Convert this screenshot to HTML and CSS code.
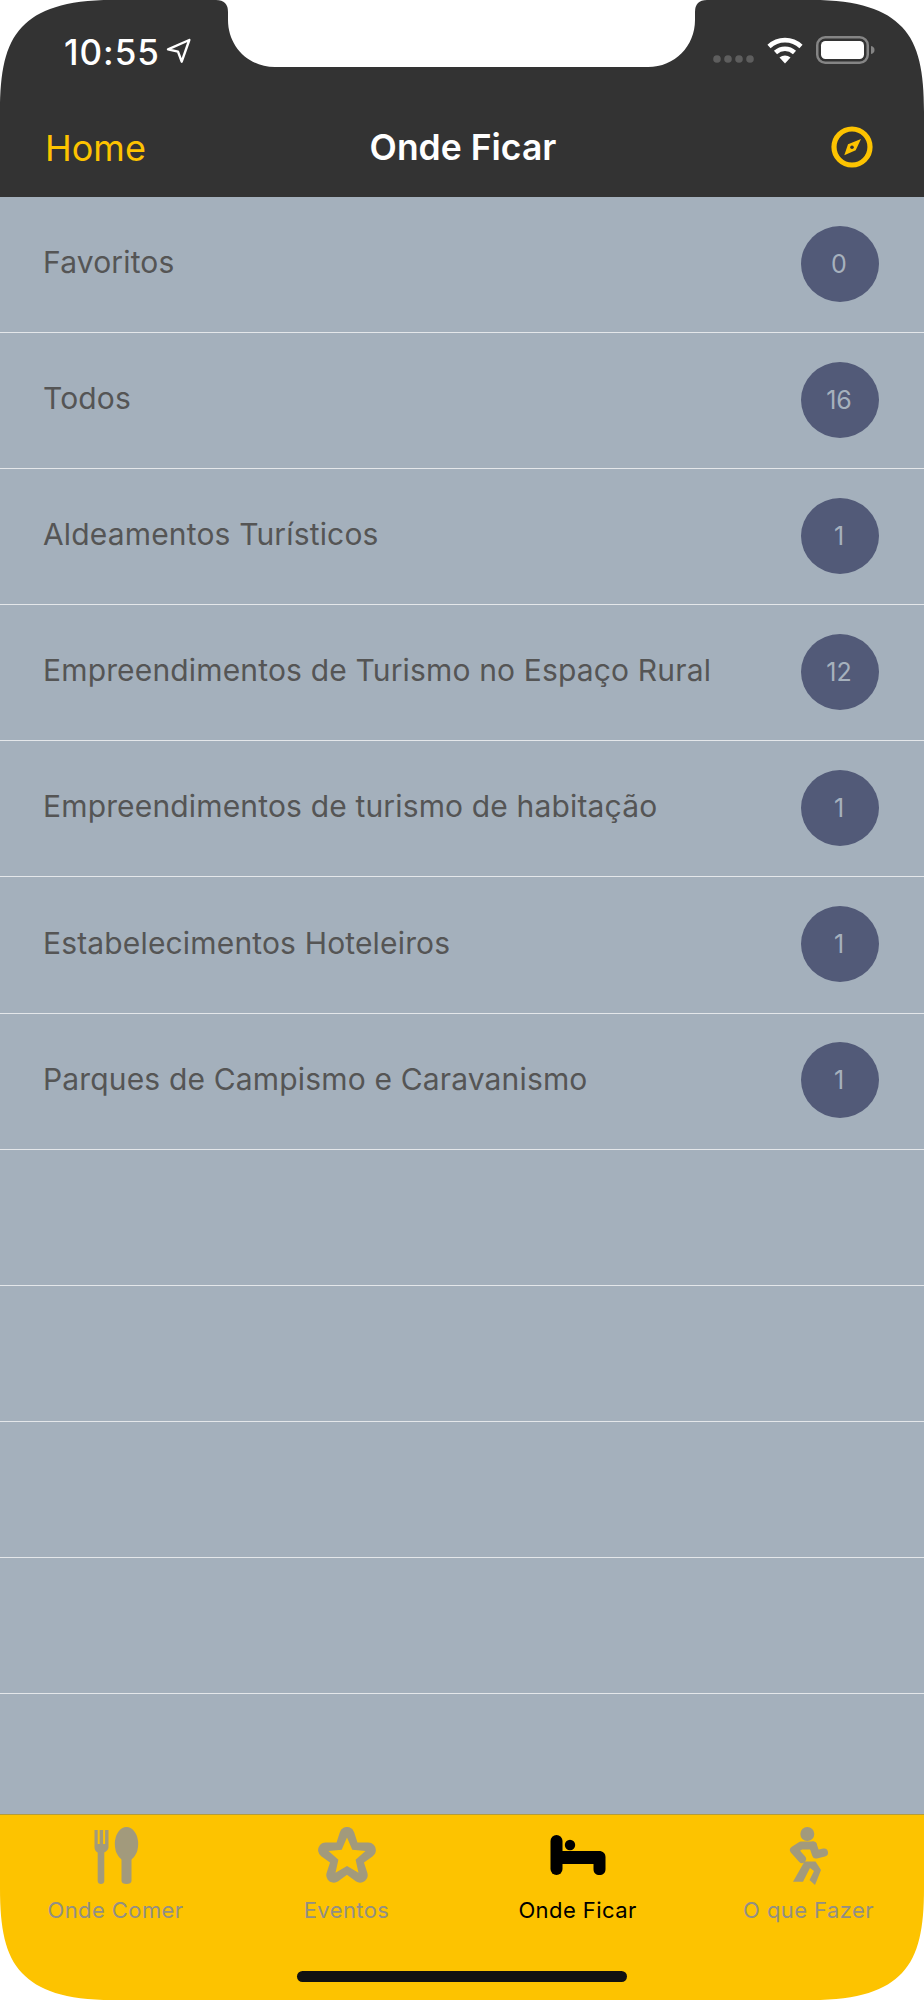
FILE: index.html
```html
<!DOCTYPE html>
<html lang="pt">
<head>
<meta charset="utf-8">
<title>Onde Ficar</title>
<link rel="stylesheet" href="styles.css">
</head>
<body>
<div class="phone">
  <header class="top">
    <div class="status">
      <div class="status-left">
        <span class="time">10:55</span>
        <svg class="loc" width="25" height="26" viewBox="0 0 25 26"><path d="M23.300 2 2 11.300l10 2.400 3.700 10Z" fill="none" stroke="#fff" stroke-width="2.400" stroke-linejoin="round"/></svg>
      </div>
      <div class="status-right">
        <svg class="dots" width="41" height="8" viewBox="0 0 41 8"><circle cx="4" cy="4" r="3.800"/><circle cx="15" cy="4" r="3.800"/><circle cx="26" cy="4" r="3.800"/><circle cx="37" cy="4" r="3.800"/></svg>
        <svg class="wifi" width="36" height="27" viewBox="0 0 36 27"><path d="M2 9.500C11 1 25 1 34 9.500" fill="none" stroke="#fff" stroke-width="4.600"/><path d="M8.500 15.500C14 10.500 22 10.500 27.500 15.500" fill="none" stroke="#fff" stroke-width="4.600"/><path d="M12.500 20.500 18 26.500l5.500-6c-3.200-2.800-7.800-2.800-11 0Z" fill="#fff"/></svg>
        <svg class="battery" width="59" height="28" viewBox="0 0 59 28"><rect x="1.250" y="1.250" width="50.500" height="25.500" rx="8" fill="none" stroke="#858585" stroke-width="2.500"/><rect x="5" y="5" width="43" height="18" rx="4.500" fill="#fff"/><path d="M55 10c2.500.6 3.500 2 3.500 4s-1 3.400-3.500 4Z" fill="#858585"/></svg>
      </div>
    </div>
    <nav class="bar">
      <a class="back">Home</a>
      <h1 class="title">Onde Ficar</h1>
      <svg class="compass" width="42" height="42" viewBox="0 0 42 42"><circle cx="21" cy="21" r="18" fill="none" stroke="#fdc300" stroke-width="5.200"/><path d="M30 13 24.700 24.300 13.300 29.300 17 18.300Z" fill="#fdc300"/><circle cx="21" cy="21.300" r="1.800" fill="#333"/></svg>
    </nav>
  </header>

  <ul class="list">
    <li class="row"><span class="name">Favoritos</span><span class="badge">0</span></li>
    <li class="row"><span class="name">Todos</span><span class="badge">16</span></li>
    <li class="row"><span class="name">Aldeamentos Turísticos</span><span class="badge">1</span></li>
    <li class="row"><span class="name">Empreendimentos de Turismo no Espaço Rural</span><span class="badge">12</span></li>
    <li class="row"><span class="name">Empreendimentos de turismo de habitação</span><span class="badge">1</span></li>
    <li class="row"><span class="name">Estabelecimentos Hoteleiros</span><span class="badge">1</span></li>
    <li class="row"><span class="name">Parques de Campismo e Caravanismo</span><span class="badge">1</span></li>
    <li class="row"></li>
    <li class="row"></li>
    <li class="row"></li>
    <li class="row"></li>
    <li class="row"></li>
  </ul>

  <footer class="tabs">
    <div class="tab">
      <svg class="ico" width="58" height="58" viewBox="0 0 58 58"><path d="M7.500 3h3.200v14h2V3h3.400v14h2V3h3.400v17c0 3-2.500 4.500-4.200 5.500V54c0 2-1.400 3-3.300 3s-3.300-1-3.300-3V25.500C8.900 24.500 7.500 23 7.500 20Z"/><ellipse cx="39.500" cy="17" rx="11.700" ry="17"/><path d="M34.500 25h10v29c0 2-2.100 3-5 3s-5-1-5-3Z"/></svg>
      <span class="label">Onde Comer</span>
    </div>
    <div class="tab">
      <svg class="ico" width="58" height="58" viewBox="0 0 58 58"><path class="star" d="M29 7.500 34 23.100 50.400 23.050 37.100 32.600 42.200 48.200 29 38.500 15.800 48.200 20.900 32.600 7.600 23.050 24 23.100Z"/><path class="star-hole" d="M29 10.500 34.300 22.700 47.500 24 37.600 32.800 40.500 45.800 29 39 17.500 45.800 20.400 32.800 10.500 24 23.700 22.700Z"/></svg>
      <span class="label">Eventos</span>
    </div>
    <div class="tab active">
      <svg class="ico" width="58" height="58" viewBox="0 0 58 58"><rect x="1.500" y="8" width="12" height="40" rx="6"/><circle cx="21" cy="18" r="5.200"/><path d="M10 24H50c4 0 6.500 2.500 6.500 6V42c0 4-2.500 6-6 6s-6-2-6-6V37H10Z"/></svg>
      <span class="label">Onde Ficar</span>
    </div>
    <div class="tab">
      <svg class="ico" width="58" height="58" viewBox="0 0 58 58"><circle cx="27.300" cy="7" r="7"/><path class="limb" d="M33 18.500H21L14 23l8 9"/><path class="limb" d="M33 18.500 36 27.500 44 25.500"/><path d="M24.500 34.500H35.500L41 43 35 58 29.500 53 34 44 30 41 23 54.800H13Z"/></svg>
      <span class="label">O que Fazer</span>
    </div>
  </footer>

  <div class="home-bar"></div>

  <svg class="notch" width="924" height="68" viewBox="0 0 924 68"><path d="M216 0Q228 0 228 12V20C228 46 248 67 275 67H648C675 67 695 46 695 20V12Q695 0 707 0Z"/></svg>
  <svg class="corner tl" width="112" height="112" viewBox="0 0 112 112"><path d="M0 112C0 72 5 45 22 27 38 10 65 0 112 0H0Z"/></svg>
  <svg class="corner tr" width="112" height="112" viewBox="0 0 112 112"><path d="M0 112C0 72 5 45 22 27 38 10 65 0 112 0H0Z"/></svg>
  <svg class="corner bl" width="112" height="112" viewBox="0 0 112 112"><path d="M0 112C0 72 5 45 22 27 38 10 65 0 112 0H0Z"/></svg>
  <svg class="corner br" width="112" height="112" viewBox="0 0 112 112"><path d="M0 112C0 72 5 45 22 27 38 10 65 0 112 0H0Z"/></svg>
</div>
</body>
</html>
```

FILE: styles.css
```css
* { box-sizing: border-box; }

html, body {
  margin: 0;
  padding: 0;
  background: #fff;
}

.phone {
  position: relative;
  width: 924px;
  height: 2000px;
  display: flex;
  flex-direction: column;
  overflow: hidden;
  font-family: Inter, "Liberation Sans", sans-serif;
}

.top {
  flex: 0 0 197px;
  background: #333;
  display: flex;
  flex-direction: column;
}

.status {
  flex: 0 0 100px;
  display: flex;
  justify-content: space-between;
  padding: 31px 49px 0 64px;
}

.status-left {
  display: flex;
  align-items: flex-start;
  gap: 6px;
}

.time {
  color: #fff;
  font-size: 35px;
  font-weight: 500;
  letter-spacing: 1px;
  line-height: 42px;
}

.loc { margin-top: 7px; }

.status-right {
  display: flex;
  align-items: flex-start;
  gap: 13px;
  margin-top: 5px;
}

.dots { margin-top: 19px; fill: #5e5e5e; }
.wifi { margin-top: 1px; }

.bar {
  flex: 1;
  display: grid;
  grid-template-columns: 1fr auto 1fr;
  align-items: center;
  padding: 0 51px 2px 45px;
}

.back {
  color: #fdc300;
  font-size: 36px;
}

.title {
  margin: 0 0 0 8px;
  color: #fff;
  font-size: 35.5px;
  font-weight: 600;
}

.compass { justify-self: end; margin-top: -2px; }

.list {
  flex: 1;
  margin: 0;
  padding: 0;
  list-style: none;
  background: #a4b0bc;
  overflow: hidden;
}

.row {
  height: 136.1px;
  display: flex;
  align-items: center;
  justify-content: space-between;
  padding: 0 45px 2px 43px;
  border-bottom: 1px solid #e4e7ea;
}

.name {
  margin-bottom: 3px;
  color: #555;
  font-size: 30px;
  letter-spacing: 0.16px;
}

.badge {
  width: 78px;
  height: 76px;
  display: flex;
  align-items: center;
  justify-content: center;
  padding-right: 2px;
  border-radius: 50%;
  background: #525a78;
  color: #a6b1bd;
  font-size: 25px;
}

.tabs {
  flex: 0 0 186px;
  display: grid;
  grid-template-columns: repeat(4, 1fr);
  background: #fdc300;
  border-top: 1px solid #b39c3c;
  padding-top: 12px;
}

.tab {
  display: flex;
  flex-direction: column;
  align-items: center;
  color: #928f85;
  fill: #a29a7c;
}

.tab.active {
  color: #000;
  fill: #000;
}

.ico { display: block; }

.star {
  stroke: #a29a7c;
  stroke-width: 15;
  stroke-linejoin: round;
}

.star-hole { fill: #fdc300; }

.limb {
  fill: none;
  stroke: #a29a7c;
  stroke-width: 8;
  stroke-linejoin: round;
  stroke-linecap: round;
}

.label {
  margin-top: 12px;
  font-size: 22px;
  letter-spacing: 0.42px;
  line-height: 26px;
}

.home-bar {
  position: absolute;
  left: 297px;
  bottom: 18px;
  width: 330px;
  height: 11px;
  border-radius: 6px;
  background: #111;
}

.notch {
  position: absolute;
  top: 0;
  left: 0;
  fill: #fff;
}

.corner {
  position: absolute;
  fill: #fff;
}

.tl { top: 0; left: 0; }
.tr { top: 0; right: 0; transform: scaleX(-1); }
.bl { bottom: 0; left: 0; transform: scaleY(-1); }
.br { bottom: 0; right: 0; transform: scale(-1, -1); }
```
